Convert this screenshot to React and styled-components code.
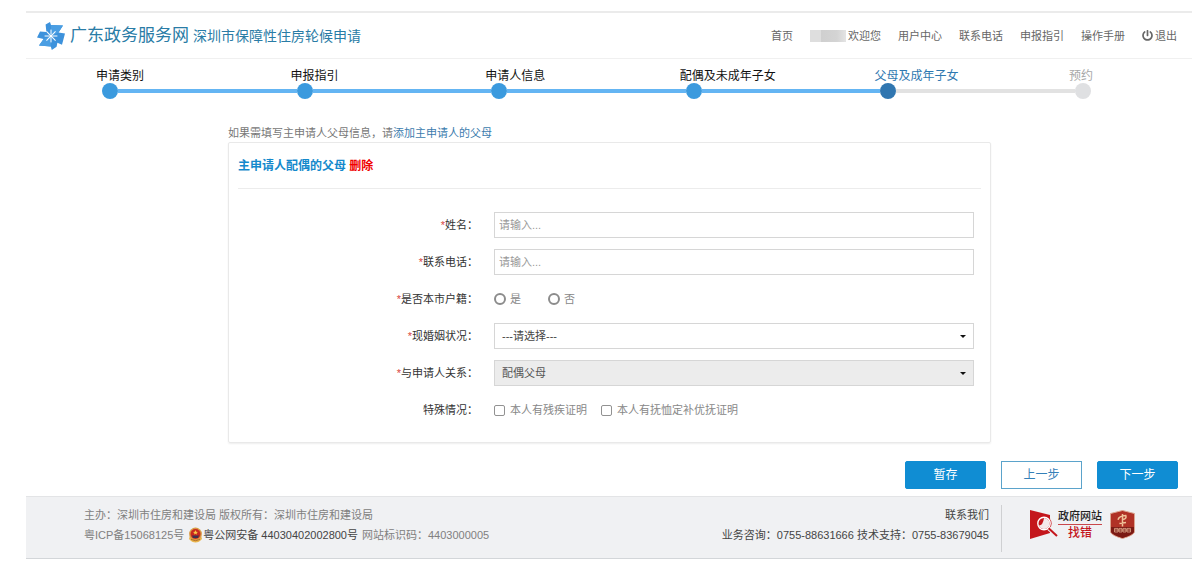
import React, { useState } from 'react';
import styled, { createGlobalStyle } from 'styled-components';
import { FaPowerOff } from 'react-icons/fa';


const steps = [
    { name: '申请类别', state: 'done' },
    { name: '申报指引', state: 'done' },
    { name: '申请人信息', state: 'done' },
    { name: '配偶及未成年子女', state: 'done' },
    { name: '父母及成年子女', state: 'current' },
    { name: '预约', state: 'todo' },
];

const dotColors = { done: '#3b9ade', current: '#3076b0', todo: '#dfe0e2' };
const labelColors = { done: '#111111', current: '#2f78b0', todo: '#a8a8a8' };

const App = () => {
    const [local, setLocal] = useState('');

    return (
        <Page>
            <GlobalStyle />
            <Header>
                <Brand href="#">
                    <Pinwheel />
                    <SiteName>广东政务服务网</SiteName>
                    <SubName>深圳市保障性住房轮候申请</SubName>
                </Brand>
                <Nav>
                    <NavLink href="#">首页</NavLink>
                    <NavLink href="#"><HiddenName />欢迎您</NavLink>
                    <NavLink href="#">用户中心</NavLink>
                    <NavLink href="#">联系电话</NavLink>
                    <NavLink href="#">申报指引</NavLink>
                    <NavLink href="#">操作手册</NavLink>
                    <NavLink href="#"><FaPowerOff size={11} />退出</NavLink>
                </Nav>
            </Header>

            <Steps>
                {steps.map((step, i) => (
                    <Step key={step.name}>
                        <StepName $state={step.state}>{step.name}</StepName>
                        <Track>
                            <Dot $state={step.state} />
                            {i < steps.length - 1 && <Line $done={step.state === 'done'} />}
                        </Track>
                    </Step>
                ))}
            </Steps>

            <Main>
                <Note>如果需填写主申请人父母信息，请<NoteLink href="#">添加主申请人的父母</NoteLink></Note>
                <Card>
                    <CardTitle>主申请人配偶的父母 <Remove type="button">删除</Remove></CardTitle>
                    <Form>
                        <Label htmlFor="name"><Star>*</Star>姓名：</Label>
                        <Input id="name" placeholder="请输入..." />

                        <Label htmlFor="phone"><Star>*</Star>联系电话：</Label>
                        <Input id="phone" placeholder="请输入..." />

                        <Label as="span" id="local"><Star>*</Star>是否本市户籍：</Label>
                        <Options role="radiogroup" aria-labelledby="local" $gap="27px">
                            <Option>
                                <Radio name="local" checked={local === 'yes'} onChange={() => setLocal('yes')} />是
                            </Option>
                            <Option>
                                <Radio name="local" checked={local === 'no'} onChange={() => setLocal('no')} />否
                            </Option>
                        </Options>

                        <Label htmlFor="marriage"><Star>*</Star>现婚姻状况：</Label>
                        <SelectBox>
                            <Select id="marriage">
                                <option>---请选择---</option>
                                <option>已婚</option>
                                <option>离异</option>
                                <option>丧偶</option>
                            </Select>
                        </SelectBox>

                        <Label htmlFor="relation"><Star>*</Star>与申请人关系：</Label>
                        <SelectBox>
                            <Select id="relation" disabled>
                                <option>配偶父母</option>
                            </Select>
                        </SelectBox>

                        <Label as="span" id="special">特殊情况：</Label>
                        <Options role="group" aria-labelledby="special" $gap="14px">
                            <Option><Check />本人有残疾证明</Option>
                            <Option><Check />本人有抚恤定补优抚证明</Option>
                        </Options>
                    </Form>
                </Card>
            </Main>

            <Actions>
                <Button type="button">暂存</Button>
                <Button type="button" $outline>上一步</Button>
                <Button type="button">下一步</Button>
            </Actions>

            <Footer>
                <FooterInfo>
                    <div>主办：深圳市住房和建设局 版权所有：深圳市住房和建设局</div>
                    <FooterRow>
                        粤ICP备15068125号
                        <Police href="#"><PoliceBadge />粤公网安备 44030402002800号</Police>
                        网站标识码：4403000005
                    </FooterRow>
                </FooterInfo>
                <Contact>
                    <div>联系我们</div>
                    <div>业务咨询：0755-88631666 技术支持：0755-83679045</div>
                </Contact>
                <Marks>
                    <ErrorMark href="#">
                        <Magnifier />
                        <MarkText>
                            <MarkTop>政府网站</MarkTop>
                            <MarkBottom>找错</MarkBottom>
                        </MarkText>
                    </ErrorMark>
                    <Shield />
                </Marks>
            </Footer>
        </Page>
    )
};

export default App;

const Pinwheel = () => (
    <svg width="28" height="28" viewBox="0 0 28 28" aria-hidden="true">
        <path
            d="M8.6 2.6 L13 0 L14 3 L26 3.6 L21.5 10.6 L28 11.4 L25 22.8 L20.4 20.8 L19.6 24.8 L14.8 28 L13.8 24.4 L2 23.4 L6.6 17 L0 15.4 L3 9.4 L9.4 10 Z"
            fill="#3d92dc"
        />
        <path d="M14 3 L26 3.6 L21.5 10.6 L14 14 Z M13.8 24.4 L2 23.4 L6.6 17 L14 14 Z" fill="#4a9ee3" />
        {[0, 45, 90, 135, 180, 225, 270, 315].map((deg) => (
            <path key={deg} d="M14 12.4 V7.6" stroke="#fff" strokeWidth="1" transform={`rotate(${deg} 14 14)`} />
        ))}
        <circle cx="14" cy="14" r="1.6" fill="#fff" />
    </svg>
);

const PoliceBadge = () => (
    <svg width="15" height="16" viewBox="0 0 15 16" aria-hidden="true">
        <path d="M2 8 L1 12 Q4 15.6 7.5 15.6 Q11 15.6 14 12 L13 8 Z" fill="#eab54d" />
        <circle cx="7.5" cy="7" r="6.4" fill="#d99a45" />
        <circle cx="7.5" cy="7" r="5" fill="#c8281f" />
        <path d="M7.5 3 L8.2 4.8 L10 4.9 L8.6 6 L9 7.6 L7.5 6.7 L6 7.6 L6.4 6 L5 4.9 L6.8 4.8 Z" fill="#f7c948" />
        <path d="M4 8.4 H11 L10 11 H5 Z" fill="#3b3350" />
        <path d="M3 12.4 Q7.5 15 12 12.4" stroke="#b3722b" fill="none" />
    </svg>
);

const Magnifier = () => (
    <svg width="28" height="29" viewBox="0 0 28 29" aria-hidden="true">
        <path d="M0 0 L20 5 V23 L0 29 Z" fill="#c4161c" />
        <circle cx="14" cy="13.5" r="7.6" fill="#c4161c" />
        <circle cx="14" cy="13.5" r="6.2" fill="#c4161c" stroke="#fff" strokeWidth="1.4" />
        <path d="M14 8 A5.5 5.5 0 0 1 14 19 Q10 18.6 8.8 15.4 Q13 15.6 14 8 Z" fill="#f4e9ea" />
        <path d="M18.6 18.2 L27 26" stroke="#f0f1f3" strokeWidth="4" />
        <path d="M18.6 18.2 L27 26" stroke="#c4161c" strokeWidth="2" />
    </svg>
);

const Shield = () => (
    <svg width="25" height="29" viewBox="0 0 25 29" aria-hidden="true">
        <path d="M12.5 0.5 L24.5 3.5 V22 Q23 25.6 12.5 28.5 Q2 25.6 0.5 22 V3.5 Z" fill="#b03226" stroke="#dba893" />
        <path d="M1 17 H24 V22 Q22.5 25 12.5 28 Q2.5 25 1 22 Z" fill="#7b1a14" />
        <path d="M12.5 4 V16.4 M8 9.8 Q9 6 15.8 5.6 Q17 9 12.5 9.6 M9.4 13.6 L16 12.4" stroke="#f0c39a" strokeWidth="1.5" fill="none" />
        <path d="M4.5 18.4 H8 V22 H4.5 Z M9 18.4 H12 V22 H9 Z M13 18.4 H16 V22 H13 Z M17 18.4 H20.5 V22 H17 Z M5 20 H20" stroke="#e0a98c" strokeWidth="0.8" fill="none" />
    </svg>
);

const GlobalStyle = createGlobalStyle`
* {
    box-sizing: border-box;
}

body {
    margin: 0;
    background: #fff;
    color: #333;
    font: 11px/20px "Liberation Sans", "Noto Sans CJK SC", sans-serif;
}

a {
    text-decoration: none;
}

button, input, select {
    font: inherit;
}
`;

const Page = styled.div`
padding: 11px 8px 0 26px;
`;

const Header = styled.header`
display: flex;
justify-content: space-between;
align-items: center;
height: 48px;
padding: 0 15px 0 11px;
border-top: 2px solid #ebebeb;
border-bottom: 1px solid #f0f0f0;
`;

const Brand = styled.a`
display: flex;
align-items: center;
color: #2a7ca6;
`;

const SiteName = styled.span`
margin: 0 4px 0 5px;
font-size: 17px;
`;

const SubName = styled.span`
font-size: 14px;
`;

const Nav = styled.nav`
display: flex;
gap: 17px;
`;

const NavLink = styled.a`
display: flex;
align-items: center;
gap: 2px;
color: #666;
`;

const HiddenName = styled.span`
width: 36px;
height: 12px;
background: linear-gradient(90deg, #dedede 30%, #cfcfcf 31%, #d4d4d4 75%, #e4e4e4);
`;

const Steps = styled.ol`
display: flex;
margin: 0;
padding: 10px 0 0 76px;
list-style: none;
`;

const Step = styled.li`
flex: 1 1 0;

&:last-child {
    flex: 0 0 117px;
}
`;

const StepName = styled.div`
margin-left: -6px;
font-size: 12px;
line-height: 14px;
white-space: nowrap;
color: ${({ $state }) => labelColors[$state]};
`;

const Track = styled.div`
display: flex;
align-items: center;
`;

const Dot = styled.span`
flex: none;
width: 16px;
height: 16px;
border-radius: 50%;
background: ${({ $state }) => dotColors[$state]};
`;

const Line = styled.span`
flex: 1;
height: 4px;
background: ${({ $done }) => ($done ? '#64b5f3' : '#e2e2e2')};
`;

const Main = styled.main`
padding: 25px 201px 0 202px;
`;

const Note = styled.p`
margin: 0;
line-height: 18px;
color: #777;
`;

const NoteLink = styled.a`
color: #3c7cae;
`;

const Card = styled.section`
padding: 0 9px 19px;
border: 1px solid #e9e9e9;
border-radius: 2px;
box-shadow: 0 1px 2px #eee;
`;

const CardTitle = styled.h2`
margin: 0;
padding: 15px 0 13px;
border-bottom: 1px solid #ececec;
font-size: 12px;
line-height: 17px;
color: #1489cc;
`;

const Remove = styled.button`
padding: 0;
border: 0;
background: none;
color: #f00000;
cursor: pointer;
`;

const Form = styled.form`
display: grid;
grid-template-columns: 1fr 2fr;
grid-auto-rows: 26px;
align-items: center;
gap: 11px 16px;
padding: 23px 7px 0 0;
`;

const Label = styled.label`
text-align: right;
color: #333;
`;

const Star = styled.span`
color: #d9463e;
`;

const Input = styled.input`
width: 100%;
height: 26px;
padding: 0 4px;
border: 1px solid #d6d6d6;
color: #555;

&::placeholder {
    color: #999;
}
`;

const Options = styled.div`
display: flex;
gap: ${({ $gap }) => $gap};
`;

const Option = styled.label`
display: flex;
align-items: center;
gap: 4px;
color: #888;
`;

const Radio = styled.input.attrs({ type: 'radio' })`
appearance: none;
width: 12px;
height: 12px;
margin: 0;
border: 2px solid #8c8c8c;
border-radius: 50%;

&:checked {
    background: radial-gradient(#1489cc 50%, #fff 55%);
}
`;

const Check = styled.input.attrs({ type: 'checkbox' })`
appearance: none;
width: 11px;
height: 11px;
margin: 0 1px 0 0;
border: 1px solid #929292;
border-radius: 2px;

&:checked {
    background: #1489cc;
}
`;

const SelectBox = styled.div`
position: relative;

&::after {
    content: '';
    position: absolute;
    top: 12px;
    right: 8px;
    border: 3px solid transparent;
    border-top-color: #111;
    border-bottom: 0;
    pointer-events: none;
}
`;

const Select = styled.select`
appearance: none;
display: block;
width: 100%;
height: 26px;
padding: 0 7px;
border: 1px solid #d6d6d6;
border-radius: 0;
background: #fff;
color: #444;

&:disabled {
    background: #ececec;
    color: #555;
    opacity: 1;
}
`;

const Actions = styled.div`
display: flex;
justify-content: flex-end;
gap: 15px;
padding: 18px 14px 7px 0;
`;

const Button = styled.button`
width: 81px;
height: 28px;
padding: 0;
border: 1px solid ${({ $outline }) => ($outline ? '#5ba3cb' : '#108dd3')};
border-radius: ${({ $outline }) => ($outline ? '0' : '2px')};
background: ${({ $outline }) => ($outline ? '#fff' : '#108dd3')};
color: ${({ $outline }) => ($outline ? '#3580b8' : '#fff')};
font-size: 12px;
cursor: pointer;
`;

const Footer = styled.footer`
display: flex;
padding: 8px 57px 6px 58px;
border-top: 1px solid #e3e4e6;
border-bottom: 1px solid #d3d6d9;
background: #f0f1f3;
`;

const FooterInfo = styled.div`
flex: 1;
color: #808080;
`;

const FooterRow = styled.div`
display: flex;
align-items: center;
gap: 4px;
`;

const Police = styled.a`
display: flex;
align-items: center;
color: #444;
`;

const Contact = styled.div`
height: 47px;
padding-right: 12px;
border-right: 1px solid #cfd0d2;
text-align: right;
color: #444;
`;

const Marks = styled.div`
display: flex;
align-items: center;
gap: 8px;
height: 38px;
padding-left: 28px;
`;

const ErrorMark = styled.a`
display: flex;
align-items: center;
`;

const MarkText = styled.span`
display: flex;
flex-direction: column;
text-align: center;
font-weight: 500;
line-height: 16px;
`;

const MarkTop = styled.span`
border-bottom: 1px solid #c9484b;
color: #222;
`;

const MarkBottom = styled.span`
font-size: 12px;
color: #c4161c;
`;
